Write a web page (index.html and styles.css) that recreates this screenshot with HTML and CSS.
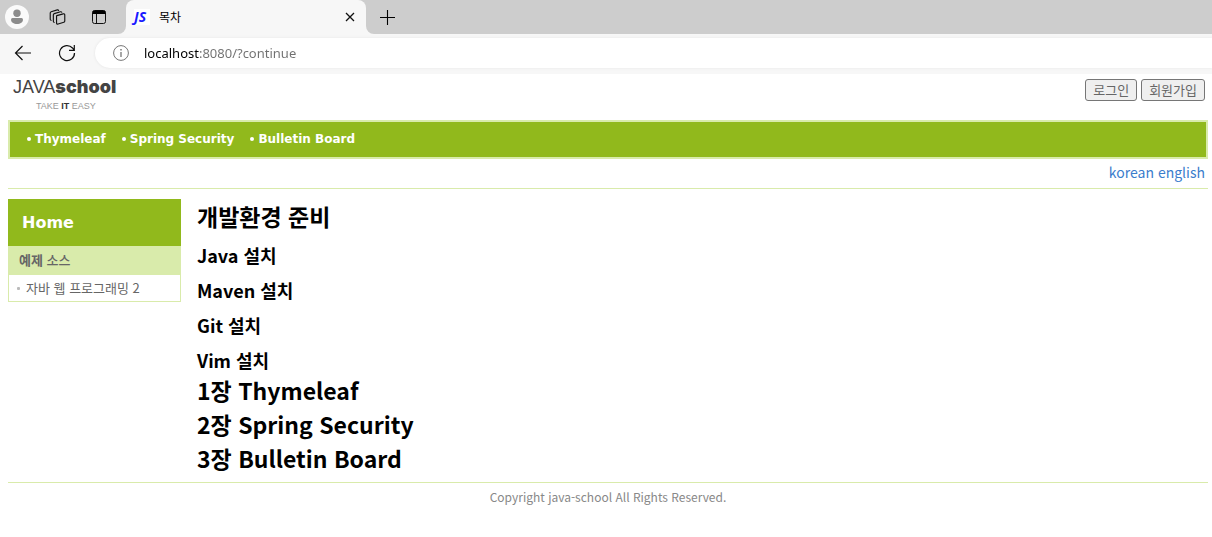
FILE: index.html
```html
<!DOCTYPE html>
<html lang="ko">
<head>
<meta charset="utf-8">
<title>목차</title>
<link rel="stylesheet" href="styles.css">
</head>
<body>
<div class="browser">
  <div class="tabs">
    <div class="tools">
      <button class="icon-button" aria-label="Profile">
        <svg width="24" height="24" viewBox="0 0 24 24"><circle cx="12" cy="12" r="12" fill="#fafafa"/><circle cx="12" cy="8.2" r="3.7" fill="#8c8c8c"/><path d="M6 14.500q0-1.500 1.500-1.500h9q1.500 0 1.500 1.500c0 2.800-2.700 4.500-6 4.500s-6-1.700-6-4.500z" fill="#8c8c8c"/></svg>
      </button>
      <button class="icon-button" aria-label="Workspaces">
        <svg width="17" height="18" viewBox="0 0 18 18" fill="none" stroke="#111" stroke-width="1.200" stroke-linejoin="round" stroke-linecap="round"><path d="M8.300 7.500 15 5.700q1.700-.4 1.700 1.100v6.400q0 1-1 1.300l-6 1.900q-1.700.5-1.700-1.100V8.400q0-.7.300-.9z"/><path d="M5.500 14.800q-.9-.2-.9-1.200V6.700q0-1 1-1.300l6.500-1.900q1-.3 1.400.5M2.200 12.500q-.9-.2-.9-1.200V4.700q0-1 1-1.300L8.800 1.500q1-.3 1.400.5"/></svg>
      </button>
      <button class="icon-button" aria-label="Tab actions">
        <svg width="16" height="16" viewBox="0 0 16 16"><rect x="1.500" y="1.500" width="13" height="13" rx="2" fill="none" stroke="#111"/><path d="M1.500 3.500q0-2 2-2h9q2 0 2 2V5h-13z" fill="#000"/><path d="M5.500 5v9.500" stroke="#111"/></svg>
      </button>
    </div>
    <div class="tab">
      <span class="favicon">JS</span>
      <span class="tab-title">목차</span>
      <button class="icon-button" aria-label="Close tab">
        <svg width="10" height="10" viewBox="0 0 10 10"><path d="M1 1l8 8M9 1 1 9" stroke="#111" stroke-width="1.300"/></svg>
      </button>
    </div>
    <button class="icon-button new-tab" aria-label="New tab">
      <svg width="15" height="15" viewBox="0 0 15 15"><path d="M7.500 0v15M0 7.500h15" stroke="#000" stroke-width="1.100"/></svg>
    </button>
  </div>
  <div class="toolbar">
    <button class="icon-button" aria-label="Back">
      <svg width="18" height="16" viewBox="0 0 18 16" fill="none" stroke="#111" stroke-width="1.200"><path d="M17 8H1.500M8.500 1l-7 7 7 7"/></svg>
    </button>
    <button class="icon-button" aria-label="Refresh">
      <svg width="18" height="18" viewBox="0 0 18 18" fill="none" stroke="#111" stroke-width="1.200"><path d="M16.500 9A7.500 7.500 0 1 1 14.500 4L16 6M16.300 1v5.300h-5.300"/></svg>
    </button>
    <label class="address">
      <svg width="16" height="16" viewBox="0 0 16 16" fill="none" stroke="#777"><circle cx="8" cy="8" r="7.400"/><path d="M8 7v5" stroke-width="1.300"/><path d="M8 4v1.500" stroke-width="1.500"/></svg>
      <input class="url" type="text" aria-label="Address" value="localhost:8080/?continue">
    </label>
  </div>
</div>
<div class="page">
  <header class="header">
    <a class="logo" href="#"><span class="logo-name">JAVA<b>school</b></span><span class="logo-tag">TAKE <b>IT</b> EASY</span></a>
    <div class="account"><button class="account-button">로그인</button><button class="account-button">회원가입</button></div>
  </header>
  <nav class="main-nav">
    <a href="#">Thymeleaf</a><a href="#">Spring Security</a><a href="#">Bulletin Board</a>
  </nav>
  <div class="languages"><a href="#">korean</a> <a href="#">english</a></div>
  <div class="columns">
    <aside class="sidebar">
      <h1 class="side-title">Home</h1>
      <h2 class="side-heading">예제 <span>소스</span></h2>
      <ul class="side-list"><li><a href="#">자바 웹 프로그래밍 2</a></li></ul>
    </aside>
    <main class="content">
      <h2>개발환경 준비</h2>
      <h3>Java 설치</h3>
      <h3>Maven 설치</h3>
      <h3>Git 설치</h3>
      <h3>Vim 설치</h3>
      <h2>1장 Thymeleaf</h2>
      <h2>2장 Spring Security</h2>
      <h2>3장 Bulletin Board</h2>
    </main>
  </div>
  <footer class="footer">Copyright java-school All Rights Reserved.</footer>
</div>
</body>
</html>
```
FILE: styles.css
```css
* { box-sizing: border-box; }
body {
  margin: 0;
  background: #fff;
  color: #000;
  font-family: "Noto Sans CJK KR", sans-serif;
  font-size: 14px;
}
a { text-decoration: none; }
h1, h2, h3, ul { margin: 0; padding: 0; }

.browser { background: #f7f7f7; }
.icon-button {
  display: flex;
  padding: 0;
  border: 0;
  background: none;
}
.tabs {
  display: flex;
  height: 34px;
  background: #f7f7f7;
}
.tools {
  display: flex;
  align-items: center;
  gap: 20px;
  width: 126px;
  padding-left: 5px;
  background: #cdcdcd;
  border-bottom-right-radius: 8px;
}
.tools .icon-button + .icon-button + .icon-button { margin-left: 5px; }
.tab {
  display: flex;
  align-items: center;
  width: 240px;
  padding: 0 11px 0 8px;
  background: #f7f7f7;
  box-shadow: 0 -8px 0 8px #cdcdcd;
  clip-path: inset(0);
  border-radius: 8px 8px 0 0;
}
.favicon {
  width: 16px;
  background: #fff;
  color: #1a1aff;
  font: italic bold 14px/16px "Open Sans", sans-serif;
}
.tab-title { flex: 1; padding-left: 9px; font-size: 12px; line-height: 16px; }
.new-tab {
  flex: 1;
  align-items: center;
  padding-left: 14px;
  background: #cdcdcd;
  border-bottom-left-radius: 8px;
}
.toolbar {
  display: flex;
  align-items: center;
  gap: 26px;
  height: 40px;
  padding: 0 0 2px 14px;
}
.address {
  display: flex;
  align-items: center;
  flex: 1;
  gap: 15px;
  height: 30px;
  margin-left: -7px;
  padding-left: 18px;
  border-radius: 15px 0 0 15px;
  background: #fff;
  box-shadow: 0 0 3px #e4e4e4;
}
.url {
  flex: 1;
  padding: 0;
  border: 0;
  outline: 0;
  background: linear-gradient(90deg, #000 55px, #707070 55px);
  -webkit-background-clip: text;
  background-clip: text;
  color: transparent;
  font: 13px/20px "Noto Sans", sans-serif;
}

.page { padding: 0 4px 0 8px; }
.header {
  display: flex;
  justify-content: space-between;
  align-items: flex-start;
  height: 46px;
  padding: 4px 3px 0 5px;
}
.logo {
  display: flex;
  flex-direction: column;
  color: #444;
  font-family: "Liberation Sans", sans-serif;
}
.logo-name { font-size: 18px; line-height: 18px; }
.logo-name b { font: 900 18px/18px Inter, sans-serif; }
.logo-tag { padding: 4px 0 0 23px; color: #999; font-size: 9px; line-height: 12px; }
.logo-tag b { color: #333; }
.account { display: flex; gap: 4px; padding-top: 1px; }
.account-button {
  height: 22px;
  padding: 0 7px;
  border: 1px solid #767676;
  border-radius: 3px;
  background: #efefef;
  color: #666;
  font: 13px/18px "Noto Sans CJK KR", sans-serif;
}
.main-nav {
  display: flex;
  gap: 16px;
  height: 39px;
  padding: 8px 17px;
  border: 2px solid #d9ebab;
  background: #91b91c;
}
.main-nav a {
  display: flex;
  align-items: center;
  gap: 4px;
  height: 18px;
  color: #fff;
  font: bold 12px/18px "DejaVu Sans", sans-serif;
}
.main-nav a::before {
  content: "";
  width: 4px;
  height: 4px;
  border-radius: 2px;
  background: #fff;
}
.languages {
  height: 30px;
  padding: 3px 3px 0;
  border-bottom: 1px solid #d9ebab;
  text-align: right;
  font-size: 14px;
  line-height: 20px;
}
.languages a { color: #3b7dcc; }
.columns {
  display: flex;
  gap: 16px;
  align-items: flex-start;
  padding: 10px 0 7px;
}
.sidebar { width: 173px; }
.side-title {
  padding: 12px 14px 11px;
  background: #91b91c;
  color: #fff;
  font: bold 16px/24px "DejaVu Sans", sans-serif;
}
.side-heading {
  padding: 5px 11px 6px;
  background: #d9ebab;
  color: #666;
  font-size: 13px;
  line-height: 18px;
}
.side-heading span { font-weight: 500; }
.side-list {
  padding: 4px 8px;
  border: 1px solid #d9ebab;
  border-top: 0;
  list-style: none;
}
.side-list li { display: flex; align-items: center; gap: 6px; line-height: 18px; }
.side-list li::before { content: ""; width: 3px; height: 3px; border-radius: 1px; background: #bbb; }
.side-list a { color: #666; font-size: 13px; line-height: 18px; }
.content { flex: 1; }
.content h2 { font-size: 23px; line-height: 34px; }
.content h3 { font-size: 18px; line-height: 25px; padding-top: 10px; }
.footer {
  padding-top: 5px;
  border-top: 1px solid #d9ebab;
  color: #888;
  text-align: center;
  font-size: 12px;
  line-height: 18px;
}
```
